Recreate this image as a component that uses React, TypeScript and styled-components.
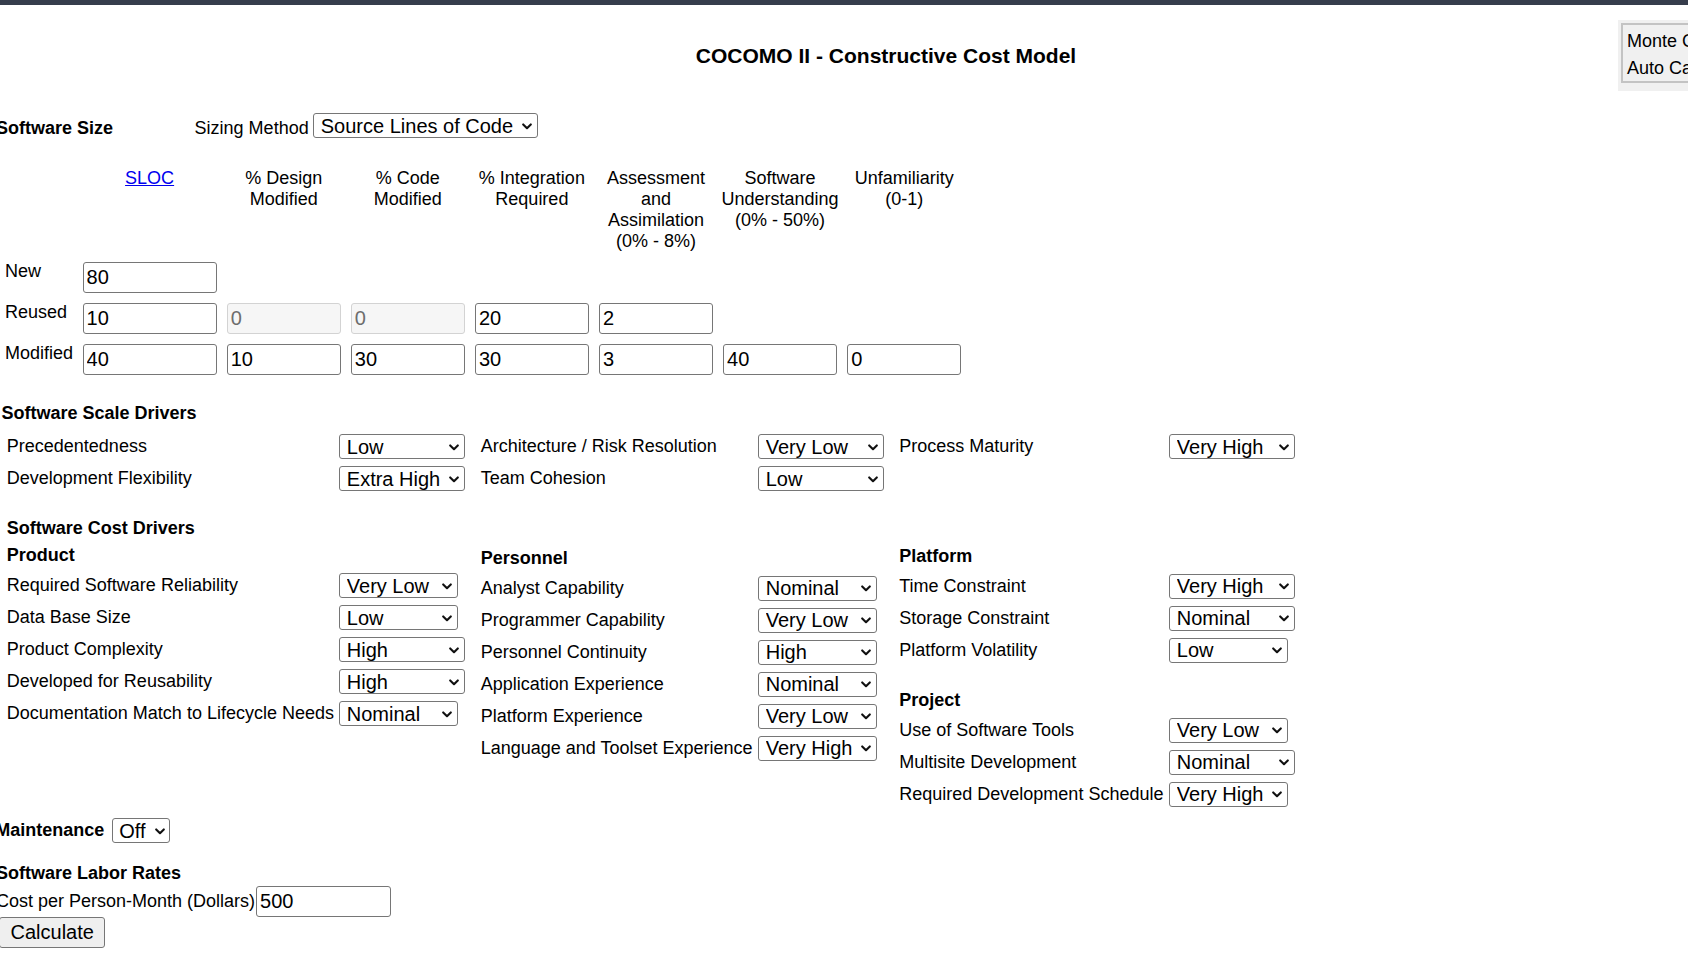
import React from "react";
import styled, { createGlobalStyle } from "styled-components";

const GlobalStyle = createGlobalStyle`
  html, body {
    margin: 0;
    padding: 0;
    overflow: hidden;
    background: #fff;
  }
  body {
    font-family: "Liberation Sans", Arial, sans-serif;
    font-size: 18px;
    color: #000;
  }
`;

const FONT = `"Liberation Sans", Arial, sans-serif`;

const Page = styled.div`
  position: relative;
  width: 1688px;
  height: 953px;
  overflow: hidden;
`;

const TopBar = styled.div`
  height: 5px;
  background: #363d4c;
`;

const Title = styled.h1`
  margin: 39px 0 0;
  padding-left: 84px;
  text-align: center;
  font-size: 21px;
  font-weight: bold;
  line-height: normal;
`;

const SidePanel = styled.div`
  position: absolute;
  left: 1618px;
  top: 20px;
  width: 240px;
  padding: 3px 3px 8px;
  background: #f0f0f0;
`;

const SideInner = styled.div`
  border: 2px solid #c3c3c3;
  padding: 3px 4px 0;
  line-height: 26.7px;
  white-space: nowrap;
`;

const SizeRow = styled.div`
  display: flex;
  align-items: center;
  height: 25px;
  margin: 45px 0 0 -4px;

  & > span:not(:last-child) {
    padding-top: 5px;
  }
`;

const Bold = styled.span<{ $w?: number; $gap?: number }>`
  font-weight: bold;
  white-space: nowrap;
  ${(p) => (p.$w ? `width: ${p.$w}px; flex: none;` : "")}
  ${(p) => (p.$gap ? `margin-right: ${p.$gap}px;` : "")}
`;

const Plain = styled.span<{ $gap?: number }>`
  white-space: nowrap;
  margin-right: ${(p) => p.$gap ?? 0}px;
`;

const SizeGrid = styled.div`
  display: grid;
  grid-template-columns: 67.5px 134px repeat(6, 114px);
  column-gap: 10.1px;
  row-gap: 10px;
  align-items: start;
  margin: 30px 0 0 5px;
`;

const ColHead = styled.div`
  justify-self: center;
  text-align: center;
  white-space: nowrap;
`;

const Link = styled.a`
  color: #0000ee;
  text-decoration: underline;
`;

const RowLabel = styled.div`
  grid-column: 1;
  margin-top: -1px;
`;

const TextInput = styled.input<{ $w?: number }>`
  box-sizing: border-box;
  width: ${(p) => (p.$w ? `${p.$w}px` : "100%")};
  height: 31px;
  margin: 0;
  padding: 0 3px;
  font: 20px ${FONT};
  color: #000;
  background: #fff;
  border: 1px solid #767676;
  border-radius: 3px;
  outline: none;

  &:disabled {
    background: #f6f6f6;
    border-color: #d3d3d3;
    color: #6d6d6d;
  }
`;

const SelectWrap = styled.span`
  position: relative;
  display: inline-flex;
  flex: none;
`;

const Select = styled.select`
  appearance: none;
  -webkit-appearance: none;
  box-sizing: border-box;
  height: 25px;
  margin: 0;
  padding: 0 23px 0 6.5px;
  font: 20px ${FONT};
  color: #000;
  background: #fff;
  border: 1px solid #767676;
  border-radius: 3px;
  outline: none;
`;

const Chevron = styled.svg`
  position: absolute;
  right: 5.5px;
  top: 50%;
  width: 10px;
  height: 7px;
  margin-top: -3px;
  fill: none;
  stroke: #111;
  stroke-width: 2.1;
  stroke-linecap: round;
  stroke-linejoin: round;
  pointer-events: none;
`;

const SectionHeading = styled.div<{ $mt: number; $ml: number }>`
  font-weight: bold;
  margin: ${(p) => p.$mt}px 0 0 ${(p) => p.$ml}px;
`;

const DriverColumns = styled.div<{ $mt: number }>`
  display: grid;
  grid-template-columns: 473.9px 418.6px auto;
  align-items: start;
  margin: ${(p) => p.$mt}px 0 0 6.8px;
`;

const DriverGroup = styled.div<{ $pt?: number }>`
  display: flex;
  flex-direction: column;
  padding-top: ${(p) => p.$pt ?? 0}px;
`;

const GroupTitle = styled.div<{ $mt?: number }>`
  font-weight: bold;
  margin-top: ${(p) => p.$mt ?? 0}px;
`;

const DriverList = styled.div<{ $mt?: number }>`
  display: flex;
  flex-direction: column;
  gap: 7px;
  margin-top: ${(p) => p.$mt ?? 0}px;
`;

const DriverRow = styled.div<{ $label: number }>`
  display: grid;
  grid-template-columns: ${(p) => p.$label}px auto;
  align-items: center;
  justify-items: start;
  height: 25px;
`;

const InlineRow = styled.div<{ $mt: number; $ml: number; $h: number }>`
  display: flex;
  align-items: center;
  height: ${(p) => p.$h}px;
  margin: ${(p) => p.$mt}px 0 0 ${(p) => p.$ml}px;
`;

const CalcButton = styled.button`
  display: block;
  box-sizing: border-box;
  height: 31px;
  margin: 0 0 0 -1px;
  padding: 0 10.5px;
  font: 20px ${FONT};
  color: #000;
  background: #efefef;
  border: 1px solid #767676;
  border-radius: 3px;
`;

const VL_VH = ["Very Low", "Low", "Nominal", "High", "Very High"];
const VL_XH = [...VL_VH, "Extra High"];
const L_VH = ["Low", "Nominal", "High", "Very High"];
const L_XH = [...L_VH, "Extra High"];
const N_XH = ["Nominal", "High", "Very High", "Extra High"];

interface Driver {
  label: string;
  value: string;
  options: string[];
}

const Dropdown = ({ value, options }: { value: string; options: string[] }) => (
  <SelectWrap>
    <Select defaultValue={value}>
      {options.map((o) => (
        <option key={o}>{o}</option>
      ))}
    </Select>
    <Chevron viewBox="0 0 10 7">
      <polyline points="1.2,1.4 5,5.2 8.8,1.4" />
    </Chevron>
  </SelectWrap>
);

const Drivers = ({ items, label, mt }: { items: Driver[]; label: number; mt?: number }) => (
  <DriverList $mt={mt}>
    {items.map((d) => (
      <DriverRow key={d.label} $label={label}>
        <span>{d.label}</span>
        <Dropdown value={d.value} options={d.options} />
      </DriverRow>
    ))}
  </DriverList>
);

const LABEL_W = [332.5, 277.5, 270];

const scaleGroups: Driver[][] = [
  [
    { label: "Precedentedness", value: "Low", options: VL_XH },
    { label: "Development Flexibility", value: "Extra High", options: VL_XH },
  ],
  [
    { label: "Architecture / Risk Resolution", value: "Very Low", options: VL_XH },
    { label: "Team Cohesion", value: "Low", options: VL_XH },
  ],
  [{ label: "Process Maturity", value: "Very High", options: VL_XH }],
];

const product: Driver[] = [
  { label: "Required Software Reliability", value: "Very Low", options: VL_VH },
  { label: "Data Base Size", value: "Low", options: L_VH },
  { label: "Product Complexity", value: "High", options: VL_XH },
  { label: "Developed for Reusability", value: "High", options: L_XH },
  { label: "Documentation Match to Lifecycle Needs", value: "Nominal", options: VL_VH },
];

const personnel: Driver[] = [
  { label: "Analyst Capability", value: "Nominal", options: VL_VH },
  { label: "Programmer Capability", value: "Very Low", options: VL_VH },
  { label: "Personnel Continuity", value: "High", options: VL_VH },
  { label: "Application Experience", value: "Nominal", options: VL_VH },
  { label: "Platform Experience", value: "Very Low", options: VL_VH },
  { label: "Language and Toolset Experience", value: "Very High", options: VL_VH },
];

const platform: Driver[] = [
  { label: "Time Constraint", value: "Very High", options: N_XH },
  { label: "Storage Constraint", value: "Nominal", options: N_XH },
  { label: "Platform Volatility", value: "Low", options: L_VH },
];

const project: Driver[] = [
  { label: "Use of Software Tools", value: "Very Low", options: VL_VH },
  { label: "Multisite Development", value: "Nominal", options: VL_XH },
  { label: "Required Development Schedule", value: "Very High", options: VL_VH },
];

const headers: React.ReactNode[] = [
  <Link href="#">SLOC</Link>,
  <>% Design<br />Modified</>,
  <>% Code<br />Modified</>,
  <>% Integration<br />Required</>,
  <>Assessment<br />and<br />Assimilation<br />(0% - 8%)</>,
  <>Software<br />Understanding<br />(0% - 50%)</>,
  <>Unfamiliarity<br />(0-1)</>,
];

const sizeRows: { label: string; cells: { value: string; disabled?: boolean }[] }[] = [
  { label: "New", cells: [{ value: "80" }] },
  {
    label: "Reused",
    cells: [
      { value: "10" },
      { value: "0", disabled: true },
      { value: "0", disabled: true },
      { value: "20" },
      { value: "2" },
    ],
  },
  {
    label: "Modified",
    cells: [
      { value: "40" },
      { value: "10" },
      { value: "30" },
      { value: "30" },
      { value: "3" },
      { value: "40" },
      { value: "0" },
    ],
  },
];

export default function App() {
  return (
    <Page>
      <GlobalStyle />
      <TopBar />
      <Title>COCOMO II - Constructive Cost Model</Title>

      <SizeRow>
        <Bold $w={198.6}>Software Size</Bold>
        <Plain $gap={4.6}>Sizing Method</Plain>
        <Dropdown value="Source Lines of Code" options={["Source Lines of Code", "Function Points"]} />
      </SizeRow>

      <SizeGrid>
        <div />
        {headers.map((h, i) => (
          <ColHead key={i}>{h}</ColHead>
        ))}
        {sizeRows.map((row) => (
          <React.Fragment key={row.label}>
            <RowLabel>{row.label}</RowLabel>
            {row.cells.map((c, i) => (
              <TextInput key={i} type="text" defaultValue={c.value} disabled={c.disabled} />
            ))}
          </React.Fragment>
        ))}
      </SizeGrid>

      <SectionHeading $mt={28.4} $ml={1.5}>Software Scale Drivers</SectionHeading>
      <DriverColumns $mt={10}>
        {scaleGroups.map((g, i) => (
          <DriverGroup key={i}>
            <Drivers items={g} label={LABEL_W[i]} />
          </DriverGroup>
        ))}
      </DriverColumns>

      <DriverColumns $mt={27}>
        <DriverGroup>
          <GroupTitle>Software Cost Drivers</GroupTitle>
          <GroupTitle $mt={6}>Product</GroupTitle>
          <Drivers items={product} label={LABEL_W[0]} mt={7} />
        </DriverGroup>
        <DriverGroup $pt={29.3}>
          <GroupTitle>Personnel</GroupTitle>
          <Drivers items={personnel} label={LABEL_W[1]} mt={7} />
        </DriverGroup>
        <DriverGroup $pt={27.6}>
          <GroupTitle>Platform</GroupTitle>
          <Drivers items={platform} label={LABEL_W[2]} mt={6.7} />
          <GroupTitle $mt={27.6}>Project</GroupTitle>
          <Drivers items={project} label={LABEL_W[2]} mt={6.7} />
        </DriverGroup>
      </DriverColumns>

      <InlineRow $mt={11.4} $ml={-4.7} $h={25}>
        <Bold $gap={7.4}>Maintenance</Bold>
        <Dropdown value="Off" options={["Off", "On"]} />
      </InlineRow>

      <SectionHeading $mt={20} $ml={-4}>Software Labor Rates</SectionHeading>
      <InlineRow $mt={2} $ml={-4} $h={31}>
        <Plain $gap={1}>Cost per Person-Month (Dollars)</Plain>
        <TextInput type="text" defaultValue="500" $w={135} />
      </InlineRow>
      <CalcButton type="button">Calculate</CalcButton>

      <SidePanel>
        <SideInner>
          <div>Monte Carlo</div>
          <div>Auto Calculate</div>
        </SideInner>
      </SidePanel>
    </Page>
  );
}
